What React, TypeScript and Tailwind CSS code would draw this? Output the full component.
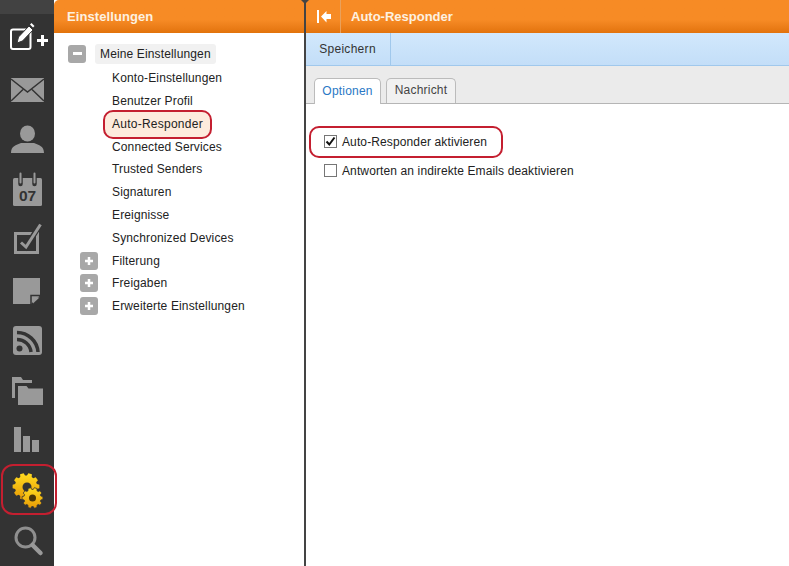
const G = "#999999";

function Cell({ children, className = "" }: { children: React.ReactNode; className?: string }) {
  return <div className={`relative h-[50px] w-[54px] shrink-0 ${className}`}>{children}</div>;
}

function Icon({ children }: { children: React.ReactNode }) {
  return (
    <svg width="54" height="50" viewBox="0 0 54 50" className="block">
      {children}
    </svg>
  );
}

function gearPath(cx: number, cy: number, r: number, teeth: number) {
  const pts: string[] = [];
  const step = (Math.PI * 2) / teeth;
  for (let i = 0; i < teeth; i++) {
    const a = i * step;
    const rows: [number, number][] = [
      [r * 0.82, a - step * 0.36],
      [r, a - step * 0.22],
      [r, a + step * 0.22],
      [r * 0.82, a + step * 0.36],
    ];
    for (const [rad, an] of rows) {
      pts.push(`${(cx + rad * Math.cos(an)).toFixed(2)} ${(cy + rad * Math.sin(an)).toFixed(2)}`);
    }
  }
  return "M" + pts.join("L") + "Z";
}

function Sidebar() {
  return (
    <div className="flex h-full w-[54px] shrink-0 flex-col bg-[#333333]">
      <div className="h-[14px] shrink-0 bg-[#424242]" />
      <Cell>
        <Icon>
          <rect x="11" y="15.500" width="19.500" height="19.500" rx="2" fill="none" stroke="#fff" strokeWidth="2" />
          <path d="M17 29l1.500-6 10.500-11 4 4-10.500 11z" fill="#fff" stroke="#333" strokeWidth="1" />
          <path d="M30 10.500l1.500-1.500 3 3-1.500 1.500z" fill="#fff" />
          <path d="M37 26.500h11M42.500 21v11" stroke="#fff" strokeWidth="3" />
        </Icon>
      </Cell>
      <Cell>
        <Icon>
          <rect x="11" y="14" width="33" height="24" fill={G} />
          <path d="M11 15l16.500 13L44 15M11 37l12-11.500M44 37L32 25.500" fill="none" stroke="#333" strokeWidth="1.500" />
        </Icon>
      </Cell>
      <Cell>
        <Icon>
          <ellipse cx="27.500" cy="19.500" rx="7.500" ry="8" fill={G} />
          <path d="M11 39c0-7 5-8 10-10h13c5 2 10 3 10 10z" fill={G} />
        </Icon>
      </Cell>
      <Cell>
        <Icon>
          <rect x="13" y="14" width="29" height="28" rx="1.500" fill={G} />
          <path d="M20.500 9v11M34.500 9v11" stroke="#333" strokeWidth="4.500" strokeLinecap="round" />
          <path d="M20.500 9.500v9M34.500 9.500v9" stroke={G} strokeWidth="2" strokeLinecap="round" />
          <text x="27.500" y="37" textAnchor="middle" fontFamily="Liberation Sans" fontWeight="700" fontSize="15.500" fill="#333">07</text>
        </Icon>
      </Cell>
      <Cell>
        <Icon>
          <rect x="15.500" y="19.500" width="22" height="19" fill="none" stroke={G} strokeWidth="3" />
          <path d="M21 28.500l5 4.500L40.500 10" fill="none" stroke="#333" strokeWidth="5.500" />
          <path d="M21 28.500l5 4.500L40.500 10.500" fill="none" stroke={G} strokeWidth="3" />
        </Icon>
      </Cell>
      <Cell>
        <Icon>
          <path d="M13 14h27v17.500L31 40H13z" fill={G} />
          <path d="M33 33.500h6.500L33 39.500z" fill={G} />
          <path d="M31 40v-8.500h9" fill="none" stroke="#333" strokeWidth="1.500" />
        </Icon>
      </Cell>
      <Cell>
        <Icon>
          <rect x="13" y="12" width="29" height="29" rx="3" fill={G} />
          <circle cx="19.500" cy="34.500" r="3" fill="#333" />
          <path d="M17 25.500a14 14 0 0 1 14 12.500M17 18.500a21 21 0 0 1 21 19.500" fill="none" stroke="#333" strokeWidth="3.500" />
        </Icon>
      </Cell>
      <Cell>
        <Icon>
          <path d="M12 34V13h9l2 3h9v3H15v15z" fill={G} />
          <path d="M18 41V22h8.500l2 2.500H43V41z" fill={G} />
        </Icon>
      </Cell>
      <Cell>
        <Icon>
          <rect x="14" y="13" width="7" height="25" fill={G} />
          <rect x="23" y="22" width="7" height="16" fill={G} />
          <rect x="32" y="26" width="7" height="12" fill={G} />
        </Icon>
      </Cell>
      <Cell>
        <Icon>
          <defs>
            <linearGradient id="gold" x1="0" y1="0" x2="0" y2="1">
              <stop offset="0" stopColor="#ffdb1f" />
              <stop offset="1" stopColor="#e79a06" />
            </linearGradient>
          </defs>
          <path d={gearPath(26, 22.500, 13.500, 10)} fill="url(#gold)" />
          <circle cx="27" cy="23" r="4.500" fill="#333" />
          <path d={gearPath(32.500, 34, 10.500, 10)} fill="url(#gold)" stroke="#333" strokeWidth="0.800" />
          <circle cx="32.500" cy="34" r="3.500" fill="#4a3608" />
        </Icon>
        <div className="absolute left-[1px] top-0 z-10 h-[51px] w-[56px] rounded-[12px] border-2 border-[#c41f30]" />
      </Cell>
      <Cell>
        <Icon>
          <circle cx="25.500" cy="23.500" r="9.500" fill="none" stroke="#8f8f8f" strokeWidth="3" />
          <path d="M32.500 31l8 8" stroke={G} strokeWidth="4.500" strokeLinecap="round" />
        </Icon>
      </Cell>
    </div>
  );
}

function TreeBox({ sign }: { sign: string }) {
  return (
    <div className="flex h-[18px] w-[18px] items-center justify-center rounded-[3px] bg-[#a8a8a8]">
      {sign === "-" ? (
        <div className="h-[3px] w-[9px] bg-white" />
      ) : (
        <svg width="10" height="10" viewBox="0 0 10 10">
          <path d="M1 5h8M5 1v8" stroke="#fff" strokeWidth="2.500" />
        </svg>
      )}
    </div>
  );
}

const children = [
  "Konto-Einstellungen",
  "Benutzer Profil",
  "Auto-Responder",
  "Connected Services",
  "Trusted Senders",
  "Signaturen",
  "Ereignisse",
  "Synchronized Devices",
];

function SettingsPanel() {
  return (
    <div className="flex h-full w-[250px] shrink-0 flex-col">
      <div className="flex h-[33px] shrink-0 items-center rounded-tl-[5px] bg-gradient-to-b from-[#f78b25] from-60% to-[#e2730b] pl-[13px] text-[13px] font-bold tracking-[0.08px] text-[#fdf1e0]">
        Einstellungen
      </div>
      <div className="flex flex-1 flex-col bg-white pt-[9px] text-[12px] tracking-[0.14px] text-[#222]">
        <div className="mb-[1.500px] flex h-[23px] items-center pl-[14px]">
          <TreeBox sign="-" />
          <span className="ml-[9px] rounded-[3px] bg-[#f1f1f1] px-[5px] py-[1px]">Meine Einstellungen</span>
        </div>
        {children.map((c) => (
          <div key={c} className="flex h-[22.860px] items-center pl-[58px]">
            {c === "Auto-Responder" ? (
              <span className="relative tracking-[0.25px]">
                <span className="relative z-10">{c}</span>
                <span className="absolute -bottom-[6px] -left-[9px] -right-[9px] -top-[5px] rounded-[10px] border-2 border-[#c41f30] bg-[#fdebdd]" />
              </span>
            ) : (
              c
            )}
          </div>
        ))}
        {["Filterung", "Freigaben", "Erweiterte Einstellungen"].map((c) => (
          <div key={c} className="flex h-[22.600px] items-center pl-[26px]">
            <TreeBox sign="+" />
            <span className="ml-[14px]">{c}</span>
          </div>
        ))}
      </div>
    </div>
  );
}

function CheckRow({ label, checked }: { label: string; checked?: boolean }) {
  return (
    <div className="flex h-[29px] items-center">
      <div className="flex h-[13px] w-[13px] items-center justify-center border border-[#767676] bg-white">
        {checked && (
          <svg width="11" height="11" viewBox="0 0 11 11">
            <path d="M1.500 5.500l2.800 3L9.500 1.500" fill="none" stroke="#111" strokeWidth="2" />
          </svg>
        )}
      </div>
      <span className="ml-[5px]">{label}</span>
    </div>
  );
}

function MainPanel() {
  return (
    <div className="flex h-full flex-1 flex-col">
      <div className="flex h-[33px] shrink-0 items-center bg-gradient-to-b from-[#f78b25] from-60% to-[#e2730b] text-[13px] font-bold text-[#fdf1e0]">
        <div className="flex h-full w-[35px] items-center justify-center border-r border-[#e9a15c]">
          <svg width="16" height="14" viewBox="0 0 16 14">
            <path d="M3 0v13" stroke="#fff" strokeWidth="2" />
            <path d="M6 6.500L11.500 1v3h4.500v5h-4.500v3.500z" fill="#fff" />
          </svg>
        </div>
        <span className="ml-[10px]">Auto-Responder</span>
      </div>
      <div className="flex h-[33px] shrink-0 items-stretch border-b border-[#a0c8ec] bg-gradient-to-b from-[#d2e8fc] to-[#c3def8] text-[12px] tracking-[0.3px] text-[#333]">
        <div className="flex w-[85px] items-center justify-center border-r border-[#a0c8ec] pr-[1px]">Speichern</div>
      </div>
      <div className="flex h-[38px] shrink-0 items-end gap-[5px] border-b border-[#b5b5b5] bg-[#ebebeb] pl-[8px] text-[12px] tracking-[0.2px]">
        <div className="-mb-px flex h-[26px] w-[67px] items-center justify-center rounded-t-[5px] border border-b-0 border-[#bbbbbb] bg-white pb-[2px] text-[#2a78c5]">
          Optionen
        </div>
        <div className="flex h-[25px] w-[70px] items-center justify-center rounded-t-[5px] border border-b-0 border-[#bbbbbb] bg-[#f1f1f1] pb-[2px] text-[#444]">
          Nachricht
        </div>
      </div>
      <div className="flex-1 bg-white pl-[18px] pt-[23px] text-[12px] tracking-[0.12px] text-[#222]">
        <div className="relative">
          <div className="absolute -left-[15px] top-[-1px] h-[32px] w-[194px] rounded-[10px] border-2 border-[#c41f30]" />
          <CheckRow label="Auto-Responder aktivieren" checked />
        </div>
        <CheckRow label="Antworten an indirekte Emails deaktivieren" />
      </div>
    </div>
  );
}

export default function App() {
  return (
    <div className="flex h-[566px] w-[789px] overflow-hidden bg-white font-['Liberation_Sans',Arial,sans-serif]">
      <Sidebar />
      <SettingsPanel />
      <div className="relative w-[2px] shrink-0 bg-[#444444]">
        <div className="absolute -left-[3px] top-0 h-0 w-0 border-x-[4px] border-t-[4px] border-x-transparent border-t-[#444444]" />
      </div>
      <MainPanel />
    </div>
  );
}
